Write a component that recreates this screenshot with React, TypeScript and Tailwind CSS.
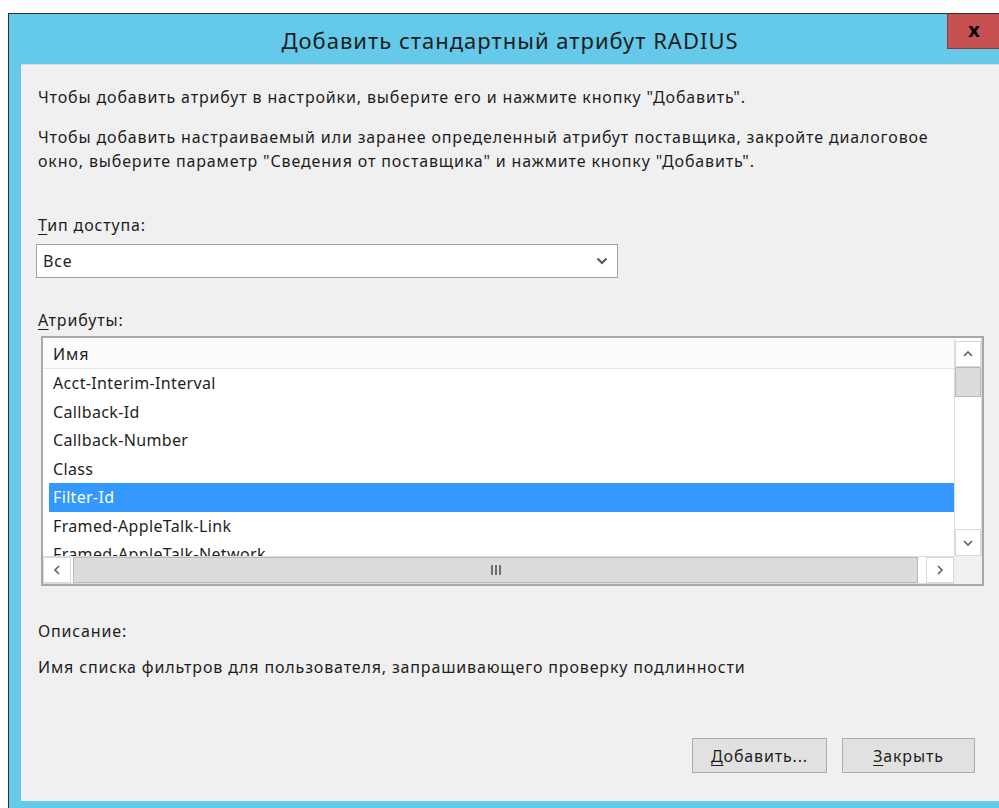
import React from "react";

const ROWS = [
  "Acct-Interim-Interval",
  "Callback-Id",
  "Callback-Number",
  "Class",
  "Filter-Id",
  "Framed-AppleTalk-Link",
  "Framed-AppleTalk-Network",
];

const SELECTED = "Filter-Id";

const FONT = { fontFamily: '"Noto Sans", "Open Sans", "DejaVu Sans", sans-serif' };

function Chevron({ dir }: { dir: "up" | "down" | "left" | "right" }) {
  const d = {
    up: "M1 6 L5 2 L9 6",
    down: "M1 2 L5 6 L9 2",
    left: "M6 1 L2 5 L6 9",
    right: "M2 1 L6 5 L2 9",
  }[dir];
  const vertical = dir === "up" || dir === "down";
  return (
    <svg
      width={vertical ? 10 : 8}
      height={vertical ? 8 : 10}
      viewBox={vertical ? "0 0 10 8" : "0 0 8 10"}
      fill="none"
      stroke="#606060"
      strokeWidth="1.6"
    >
      <path d={d} />
    </svg>
  );
}

function ScrollButton({ dir }: { dir: "up" | "down" | "left" | "right" }) {
  return (
    <div className="flex items-center justify-center bg-white border border-[#d9d9d9] w-full h-full">
      <Chevron dir={dir} />
    </div>
  );
}

function AttributeList() {
  return (
    <div className="ml-[20px] w-[943px] h-[250px] border-2 border-[#a5a9ae] bg-white grid grid-cols-[1fr_28px] grid-rows-[1fr_28px]">
      {/* rows */}
      <div className="overflow-hidden text-[16px] tracking-[0.35px]">
        <div className="h-[30px] pl-[10px] flex items-center border-b border-[#e5e5e5] bg-[#fcfcfc] text-[#1e1e1e] mt-[1px] tracking-[0.9px]">
          Имя
        </div>
        {ROWS.map((r) => (
          <div
            key={r}
            className={`ml-[6px] h-[28.5px] pl-[4px] flex items-center ${
              r === SELECTED ? "bg-[#3399ff] text-white" : "text-[#1e1e1e]"
            }`}
          >
            {r}
          </div>
        ))}
      </div>

      {/* vertical scrollbar */}
      <div className="flex flex-col bg-white border-x border-[#dcdcdc] pt-[3px]">
        <div className="h-[26px]">
          <ScrollButton dir="up" />
        </div>
        <div className="h-[30px] bg-[#dcdcdc] border border-[#b9b9b9]" />
        <div className="flex-1" />
        <div className="h-[27px]">
          <ScrollButton dir="down" />
        </div>
      </div>

      {/* horizontal scrollbar */}
      <div className="flex items-stretch bg-white border-y border-[#dcdcdc]">
        <div className="w-[28px]">
          <ScrollButton dir="left" />
        </div>
        <div className="ml-[2px] w-[845px] bg-[#dcdcdc] border border-[#b9b9b9] flex items-center justify-center">
          <div className="flex gap-[2px]">
            <div className="w-[2px] h-[10px] bg-[#6f6f6f]" />
            <div className="w-[2px] h-[10px] bg-[#6f6f6f]" />
            <div className="w-[2px] h-[10px] bg-[#6f6f6f]" />
          </div>
        </div>
        <div className="flex-1" />
        <div className="w-[28px]">
          <ScrollButton dir="right" />
        </div>
      </div>
      <div className="bg-[#f0f0f0]" />
    </div>
  );
}

function Button({ children, w }: { children: React.ReactNode; w: string }) {
  return (
    <div
      className={`${w} h-[35px] bg-[#e1e1e1] border border-[#adadad] flex items-center justify-center text-[#1e1e1e]`}
    >
      {children}
    </div>
  );
}

export default function App() {
  return (
    <div className="w-[999px] h-[808px] bg-white overflow-hidden pt-[13px] pl-[8px]" style={FONT}>
      <div className="w-[1004px] h-[800px] bg-[#65c9e9] border border-[#2f2f2f] px-[12px]">
        {/* title bar */}
        <div className="relative h-[50px] flex items-center justify-center">
          <span className="text-[22px] tracking-[1px] text-[#1e1e1e] pt-[2px]">
            Добавить стандартный атрибут RADIUS
          </span>
          <div className="absolute top-0 left-[926px] w-[60px] h-[35px] bg-[#c75050] border border-[#8e3a3a] border-t-0 flex items-center justify-center">
            <span className="text-[20px] font-bold text-black leading-none pb-[3px] pr-[6px]">x</span>
          </div>
        </div>

        {/* client area */}
        <div className="h-[737px] bg-[#f0f0f0] border-t border-[#dcdcdc] pt-[20px] text-[16px] tracking-[0.85px] text-[#1e1e1e] leading-[24px]">
          <p className="pl-[17px]">
            Чтобы добавить атрибут в настройки, выберите его и нажмите кнопку "Добавить".
          </p>
          <p className="pl-[17px] mt-[16px]">
            Чтобы добавить настраиваемый или заранее определенный атрибут поставщика, закройте диалоговое
            <br />
            окно, выберите параметр "Сведения от поставщика" и нажмите кнопку "Добавить".
          </p>

          <p className="pl-[17px] mt-[40px]">
            <span className="underline underline-offset-[3px]">Т</span>ип доступа:
          </p>
          <div className="ml-[15px] mt-[7px] w-[582px] h-[34px] bg-white border border-[#a0a0a0] flex items-center justify-between pl-[6px] pr-[9px]">
            <span>Все</span>
            <svg width="12" height="8" viewBox="0 0 12 8" fill="none" stroke="#5a5a5a" strokeWidth="2.2">
              <path d="M1.5 1.5 L6 6 L10.5 1.5" />
            </svg>
          </div>

          <p className="pl-[17px] mt-[30px]">
            <span className="underline underline-offset-[3px]">А</span>трибуты:
          </p>
          <div className="mt-[4px]">
            <AttributeList />
          </div>

          <p className="pl-[17px] mt-[33px]">Описание:</p>
          <p className="pl-[17px] mt-[12px]">
            Имя списка фильтров для пользователя, запрашивающего проверку подлинности
          </p>

          <div className="mt-[59px] flex justify-end gap-[15px] pr-[24px]">
            <Button w="w-[135px]">
              <span>
                <span className="underline underline-offset-[3px]">Д</span>обавить...
              </span>
            </Button>
            <Button w="w-[133px]">
              <span>
                <span className="underline underline-offset-[3px]">З</span>акрыть
              </span>
            </Button>
          </div>
        </div>
      </div>
    </div>
  );
}
